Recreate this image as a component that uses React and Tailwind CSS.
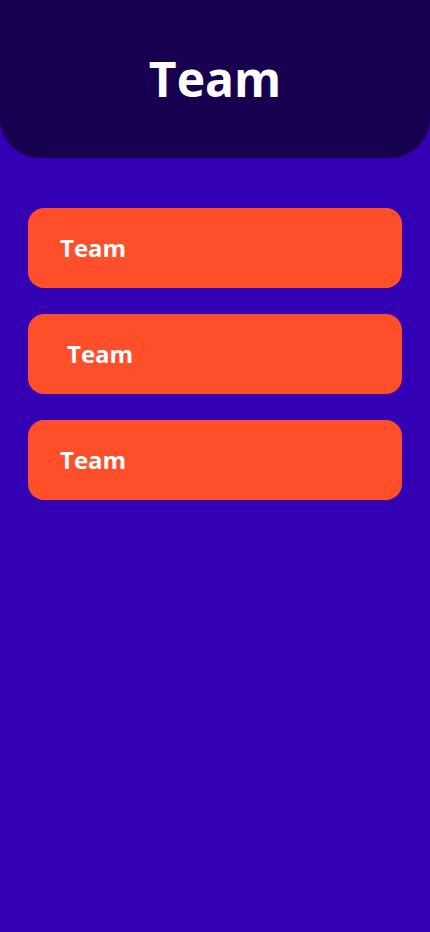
export default function App() {
  const items = [
    { label: "Team", pad: "pl-8" },
    { label: "Team", pad: "pl-[39px]" },
    { label: "Team", pad: "pl-8" },
  ];
  return (
    <div className="min-h-[932px] w-full bg-[#3300b3] font-['Open_Sans',sans-serif]">
      <header className="flex h-[158px] items-center justify-center rounded-b-[40px] bg-[#16004f]">
        <h1 className="text-[48px] font-bold leading-none text-white">Team</h1>
      </header>
      <div className="flex flex-col gap-[26px] px-7 pt-[50px]">
        {items.map((it, i) => (
          <div
            key={i}
            className={`flex h-[80px] items-center rounded-2xl bg-[#ff4f2a] ${it.pad}`}
          >
            <span className="text-[24px] font-bold text-white">{it.label}</span>
          </div>
        ))}
      </div>
    </div>
  );
}
